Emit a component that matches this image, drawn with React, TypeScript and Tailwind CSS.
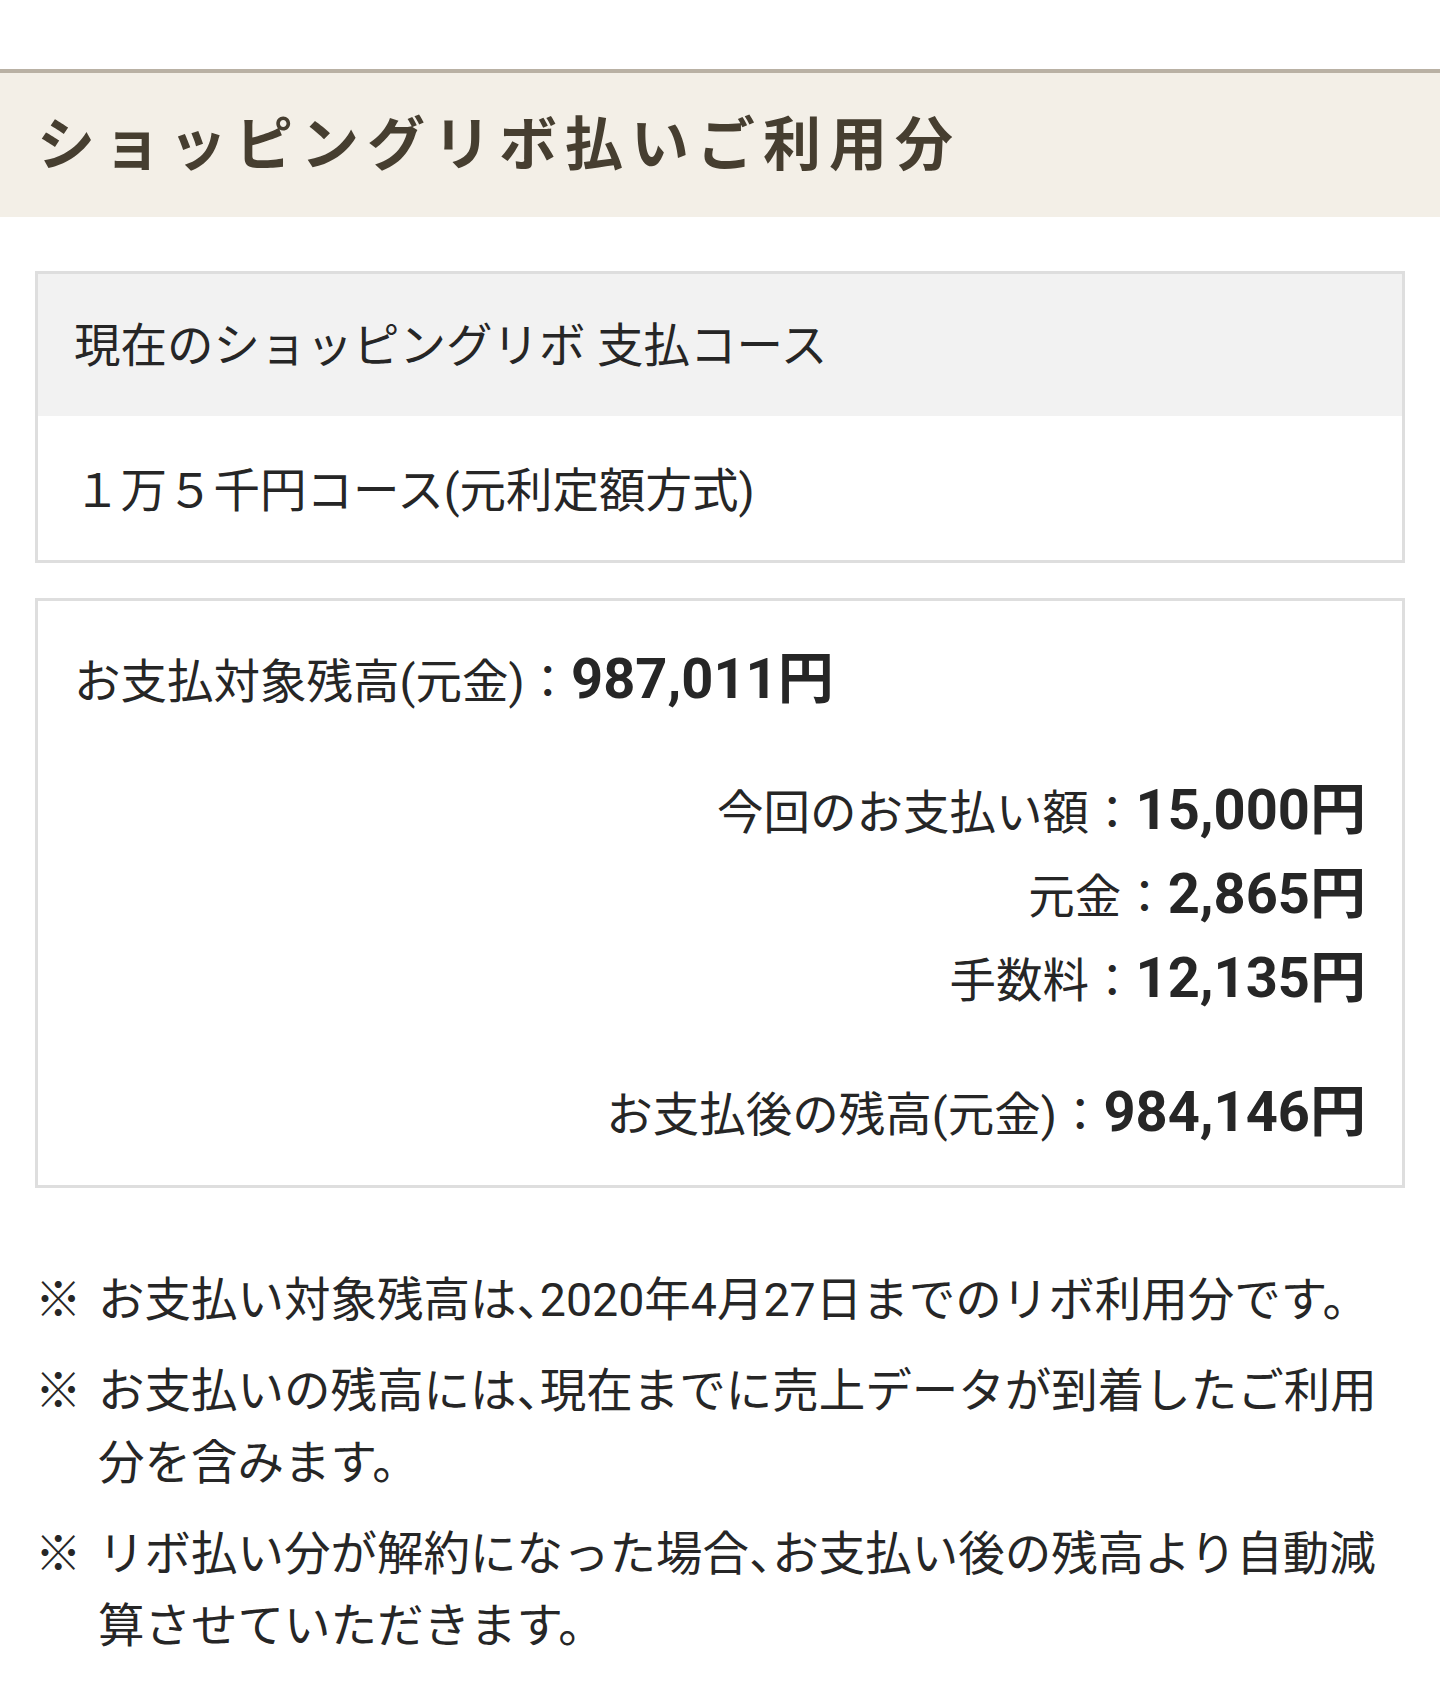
import React from 'react';

type Row = { label: string; amount: string };

const breakdown: Row[] = [
  { label: '今回のお支払い額：', amount: '15,000円' },
  { label: '元金：', amount: '2,865円' },
  { label: '手数料：', amount: '12,135円' },
];

// half-width 、 like the phone renders it
const Comma = () => <span className="[font-feature-settings:'halt']">、</span>;

const AmountLine: React.FC<Row> = ({ label, amount }) => (
  <div className="h-[84px] flex items-center whitespace-nowrap">
    <div className="flex items-baseline leading-none">
      <span className="text-[46.5px]">{label}</span>
      <span className="text-[56px] font-bold">{amount}</span>
    </div>
  </div>
);

const Note: React.FC<{ children: React.ReactNode }> = ({ children }) => (
  <div className="flex text-[46.5px] leading-[72px]">
    <span className="w-[63px] shrink-0">※</span>
    <p className="flex-1">{children}</p>
  </div>
);

export default function App() {
  return (
    <div className="min-h-screen bg-white text-[#262626] [font-family:Roboto,'Noto_Sans_CJK_JP',sans-serif]">
      <div className="h-[69px]" />

      <div className="h-[148px] border-t-4 border-[#b9b1a4] bg-[#f3efe7] flex items-center pl-[37px]">
        <h1 className="text-[58px] font-bold tracking-[8px] leading-none text-[#463e30]">
          ショッピングリボ払いご利用分
        </h1>
      </div>

      <div className="px-[35px] pt-[54px] pb-[29px]">
        {/* current course */}
        <div className="border-[3px] border-[#dedede]">
          <div className="h-[142px] bg-[#f2f2f2] flex items-center px-9 pt-[4px] text-[46.5px]">
            現在のショッピングリボ 支払コース
          </div>
          <div className="h-[144px] flex items-center px-9 pt-[8px] text-[46.5px]">
            １万５千円コース(元利定額方式)
          </div>
        </div>

        {/* balance */}
        <div className="mt-[35px] border-[3px] border-[#dedede] px-9 pt-[36px] pb-[31px]">
          <AmountLine label="お支払対象残高(元金)：" amount="987,011円" />
          <div className="mt-[47px] flex flex-col items-end">
            {breakdown.map((r) => (
              <AmountLine key={r.label} label={r.label} amount={r.amount} />
            ))}
          </div>
          <div className="mt-[50px] flex flex-col items-end">
            <AmountLine label="お支払後の残高(元金)：" amount="984,146円" />
          </div>
        </div>

        <div className="mt-[76px] space-y-[19px]">
          <Note>
            お支払い対象残高は<Comma />2020年4月27日までのリボ利用分です。
          </Note>
          <Note>
            お支払いの残高には<Comma />現在までに売上データが到着したご利用分を含みます。
          </Note>
          <Note>
            リボ払い分が解約になった場合<Comma />お支払い後の残高より自動減算させていただきます。
          </Note>
        </div>
      </div>
    </div>
  );
}
